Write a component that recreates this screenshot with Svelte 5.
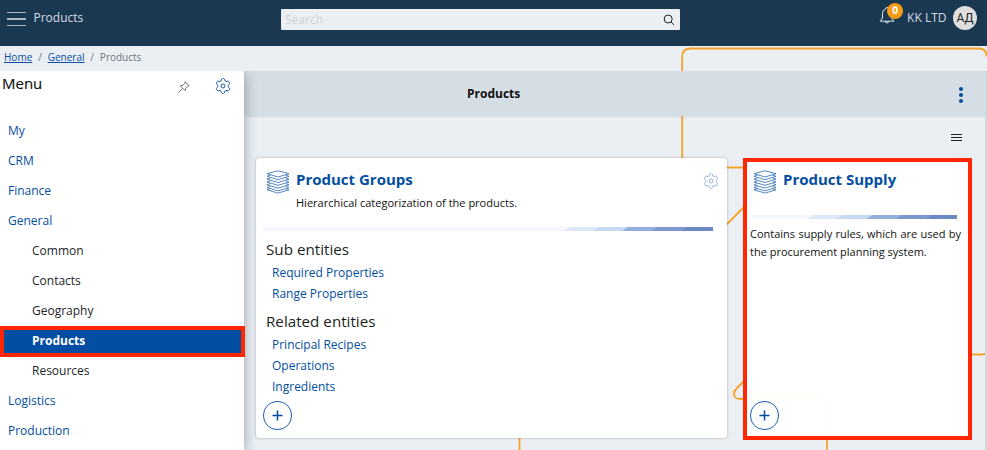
<script>
  const menu = [
    { label: 'My' },
    { label: 'CRM' },
    { label: 'Finance' },
    { label: 'General' },
    { label: 'Common', sub: true },
    { label: 'Contacts', sub: true },
    { label: 'Geography', sub: true },
    { label: 'Products', sub: true, active: true },
    { label: 'Resources', sub: true },
    { label: 'Logistics' },
    { label: 'Production' }
  ];
  const groups = [
    { title: 'Sub entities', links: ['Required Properties', 'Range Properties'] },
    { title: 'Related entities', links: ['Principal Recipes', 'Operations', 'Ingredients'] }
  ];
  const layers = [6.4, 9.2, 12, 14.8, 17.6, 19.8];
</script>

{#snippet gear()}
  <svg class="gear" viewBox="0 0 16 16" width="16" height="16">
    <path d="M6.3 2.1Q6.5.7 7.4.6h1.2Q9.5.7 9.7 2.1l.3.9 1 .6 1.1-.4q1.1-.4 1.7.5l.7 1.2q.4.9-.5 1.7l-.8.7v1.4l.8.7q.9.8.5 1.7l-.7 1.2q-.6.9-1.7.5L11 12.4l-1 .6-.3.9q-.2 1.4-1.1 1.5H7.400q-.9-.1-1.100-1.500L6 13l-1-.6-1.100.4q-1.100.4-1.700-.5l-.7-1.200q-.4-.9.5-1.700l.8-.7V7.300L2 6.600q-.9-.8-.5-1.700l.7-1.200q.6-.9 1.700-.5L5 3.600 6 3z" />
    <circle cx="8" cy="8" r="2" />
  </svg>
{/snippet}

{#snippet stack()}
  <svg class="stack" viewBox="0 0 24 24" width="24" height="24">
    <path d="M1 3.700 12 .8 23 3.700 12 7z" />
    {#each layers as y}
      <path d="M4.200 {y - 1.100}Q1 {y - .3} 1 {y}L12 {y + 3.300}L23 {y}Q23 {y - .3} 19.800 {y - 1.100}" />
    {/each}
  </svg>
{/snippet}

{#snippet add()}
  <button class="add" aria-label="Add">
    <svg viewBox="0 0 11 11" width="11" height="11"><path d="M5.500.5v10M.5 5.500h10" /></svg>
  </button>
{/snippet}

<div class="app">
  <header>
    <div class="brand">
      <span class="burger"><i></i><i></i><i></i></span>
      <span>Products</span>
    </div>
    <div class="search">
      <span>Search</span>
      <svg viewBox="0 0 12 12" width="12" height="12"><circle cx="5.200" cy="5" r="4" /><path d="m8 8 3 3" /></svg>
    </div>
    <div class="user">
      <span class="bell">
        <svg viewBox="0 0 16 17" width="16" height="17">
          <path d="M1.200 13.600q2.300-1 2.300-3.600V6.500Q3.500 2.500 6.500 2a1.500 1.500 0 0 1 3 0q3 .5 3 4.500V10q0 2.600 2.300 3.600v.6H1.200zM6 14.200q.4 1.700 2 1.700t2-1.700" />
        </svg>
        <b>0</b>
      </span>
      <span class="company">KK LTD</span>
      <span class="avatar">АД</span>
    </div>
  </header>
  <nav class="crumbs"><a href="#home">Home</a><i>/</i><a href="#general">General</a><i>/</i><span>Products</span></nav>
  <div class="body">
    <aside>
      <div class="menu-head">
        <h2>Menu</h2>
        <svg class="pin" viewBox="0 0 12 12" width="12" height="12"><path d="M7.200.8 11.200 4.800 9.600 5.200 7.800 7 7.200 9.800 2.200 4.800 5 4.200 6.800 2.400zM4.500 7.500.6 11.400" /></svg>
        {@render gear()}
      </div>
      {#each menu as item}
        <a href="#{item.label}" class="item" class:sub={item.sub} class:active={item.active}>{item.label}</a>
      {/each}
    </aside>
    <main>
      <div class="title">
        <strong>Products</strong>
        <span class="dots"><i></i><i></i><i></i></span>
      </div>
      <div class="tools"><span class="lines"><i></i><i></i><i></i></span></div>
      <div class="cards">
        <section class="card">
          <div class="card-head">
            {@render stack()}
            <div class="names">
              <h3>Product Groups</h3>
              <p>Hierarchical categorization of the products.</p>
            </div>
            {@render gear()}
          </div>
          <div class="stripe"></div>
          {#each groups as group}
            <h4>{group.title}</h4>
            {#each group.links as link}
              <a class="link" href="#{link}">{link}</a>
            {/each}
          {/each}
          {@render add()}
        </section>
        <section class="card marked">
          <div class="card-head">
            {@render stack()}
            <h3>Product Supply</h3>
          </div>
          <div class="stripe"></div>
          <p class="about">Contains supply rules, which are used by the procurement planning system.</p>
          {@render add()}
        </section>
      </div>
    </main>
  </div>
  <svg class="circuit" viewBox="0 0 987 450" width="987" height="450">
    <path d="M682.200 160V57q0-8.500 8.500-8.500h288q8 0 8 8M682.200 160q0 7.500 7.500 7.500h60M744 207l-92 92M744 381l-7 7c-6 6-2 11 3 11h79q8 0 8 8v45M970 354.500h12q5 0 5-5M519.500 438v14" />
  </svg>
</div>

<style>
  :global(body) { margin: 0; }
  .app { position: relative; isolation: isolate; width: 987px; height: 450px; overflow: hidden; display: flex; flex-direction: column; background: #ebeff4; color: #212529; font: 12px/18px "Open Sans", "Noto Sans", sans-serif; }
  .app * { box-sizing: border-box; }
  h2, h3, h4, p { margin: 0; }
  svg { display: block; fill: none; flex: none; }
  a { color: #034ea2; text-decoration: none; }
  i { font-style: normal; }
  .circuit { position: absolute; inset: 0; z-index: -1; stroke: #f5a32a; stroke-width: 1.800; }

  header { height: 46px; flex: none; background: #1b3851; display: flex; align-items: flex-start; color: #d4dce3; }
  .brand { width: 281px; height: 36px; padding-left: 7px; display: flex; align-items: center; gap: 8px; }
  .burger { display: flex; flex-direction: column; gap: 5px; width: 19px; padding-top: 2px; }
  .burger + span { margin-left: -.5px; }
  .burger i { height: 1.200px; background: #a9b8c4; }
  .search { width: 399px; height: 21px; margin-top: 9px; background: #ebeff4; border-radius: 1px; padding: 0 5px 0 4px; display: flex; align-items: center; justify-content: space-between; color: #cfd3d8; }
  .search svg { stroke: #222; stroke-width: 1; }
  .user { flex: 1; display: flex; justify-content: flex-end; align-items: center; height: 36px; padding-right: 10px; }
  .bell { position: relative; margin-right: 12px; margin-top: -6px; }
  .bell svg { stroke: #dfe6eb; stroke-width: 1; }
  .bell b { position: absolute; left: 8px; top: -4px; width: 16px; height: 16px; border-radius: 8px; background: #f59b14; color: #fff; font-size: 10px; line-height: 15px; text-align: center; }
  .company { margin-right: 6.500px; font-size: 12px; }
  .avatar { width: 24px; height: 24px; border-radius: 50%; background: #dedede; color: #222; font: 12px/24px Roboto, sans-serif; text-align: center; }

  .crumbs { height: 25px; flex: none; padding: 2px 0 0 4px; display: flex; font-size: 10px; color: #6c757d; }
  .crumbs a { text-decoration: underline; }
  .crumbs i { width: 15.400px; text-align: center; }

  .body { flex: 1; display: flex; min-height: 0; }
  aside { position: relative; z-index: 1; width: 244px; flex: none; background: #fff; box-shadow: 0 3px 12px rgba(40, 55, 75, .45); clip-path: inset(0 -20px 0 0); }
  .menu-head { height: 45px; padding: 0 13px 0 2px; display: flex; align-items: flex-start; }
  .menu-head h2 { flex: 1; font-size: 15px; font-weight: 400; line-height: 24px; color: #111; -webkit-text-stroke: .15px #111; }
  .pin { stroke: #6a7178; stroke-width: 1; margin: 10px 25px 0 0; }
  .gear { stroke: #1d5fb4; stroke-width: 1; }
  .menu-head .gear { margin-top: 7px; }
  .item { display: block; height: 30px; padding-left: 8px; line-height: 30px; }
  .sub { padding-left: 32px; color: #212529; }
  .active { position: relative; width: 245px; height: 31px; margin-bottom: -1px; border: 4px solid #ff2600; padding-left: 28px; background: #034ea2; color: #fff; font-weight: 700; line-height: 22px; }

  main { flex: 1; display: flex; flex-direction: column; border-right: 2px solid #d0d7dd; min-width: 0; }
  .title { height: 45px; flex: none; display: flex; align-items: center; padding: 0 23px 0 223px; justify-content: space-between; background: rgba(213, 221, 228, .98); color: #111; box-shadow: 0 1px 2px rgba(0, 0, 0, .08); margin-right: -1px; border-top-right-radius: 3px; }
  .title strong { font-size: 12px; }
  .dots { display: flex; flex-direction: column; gap: 2px; padding-top: 3px; }
  .dots i { width: 4px; height: 4px; border-radius: 2px; background: #034ea2; }
  .tools { height: 42px; flex: none; display: flex; justify-content: flex-end; align-items: center; padding: 1px 23px 0 0; }
  .lines { display: flex; flex-direction: column; gap: 2px; width: 11px; }
  .lines i { height: 1px; background: #222; }
  .cards { display: flex; gap: 16px; padding-left: 12px; align-items: flex-start; }
  .card { width: 471px; height: 280px; border-radius: 4px; background: rgba(255, 255, 255, .98); box-shadow: 0 0 3px rgba(0, 0, 0, .28); padding: 9px 13px 0 7px; position: relative; }
  .card-head { height: 60px; display: flex; align-items: flex-start; }
  .stack { margin: 3px 6px 0 3px; stroke: #2c68b2; stroke-width: .8; }
  .names { flex: 1; }
  h3 { font-size: 15px; line-height: 24px; color: #034ea2; font-weight: 700; }
  .names p { font-size: 11px; line-height: 23px; color: #111; }
  .card .gear { margin-top: 6px; margin-right: -5px; opacity: .45; }
  .stripe { width: 450px; height: 4px; background: linear-gradient(145deg, #6c89c4 0 0) right / 0 0 no-repeat, linear-gradient(145deg, #f4f8fd 20.500px, #dce8f7 21.500px 37px, #c5daf0 38px 54px, #91b1dc 55px 71px, #7c98cc 72px 88px, #6c89c4 89px) right / 180px 4px no-repeat, #f4f8fd; }
  h4 { font-size: 15.200px; line-height: 34px; height: 30px; padding-left: 3px; font-weight: 400; color: #1c1f22; }
  .card .link { display: block; height: 21px; line-height: 21px; padding-left: 9px; }
  .stripe + h4 { height: 31px; line-height: 36px; }
  .add { position: absolute; left: 7px; top: 243px; width: 29px; height: 29px; border: 1px solid #1d5fb4; border-radius: 14px; background: #fff; display: flex; align-items: center; justify-content: center; padding: 0; }
  .add svg { stroke: #034ea2; stroke-width: 1.500; }
  .marked { width: 229px; height: 282px; border: 4px solid #ff2600; border-radius: 0; padding: 5px 6px 0 3px; box-shadow: none; }
  .marked .card-head { height: 48px; }
  .marked .stripe { width: 207px; }
  .marked .about { font-size: 11px; line-height: 18px; text-align: justify; padding-top: 6px; width: 211px; color: #111; }
  .marked .add { left: 3px; top: 239px; }
</style>
